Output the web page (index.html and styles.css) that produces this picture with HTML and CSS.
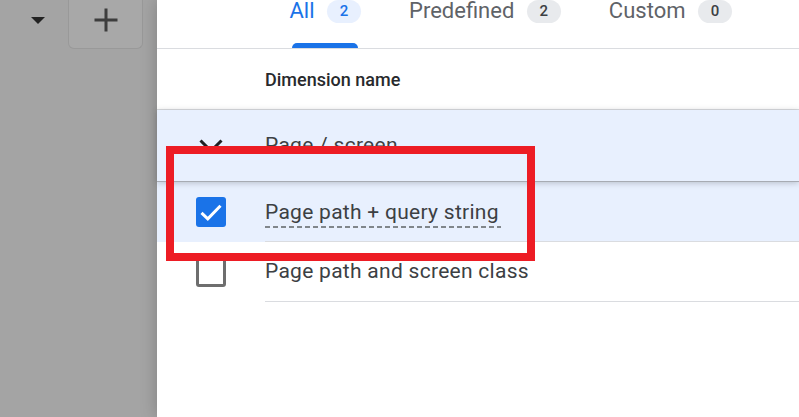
FILE: index.html
```html
<!DOCTYPE html>
<html lang="en">
<head>
<meta charset="utf-8">
<title>Dimension picker</title>
<link rel="stylesheet" href="styles.css">
</head>
<body>
  <aside class="sidebar">
    <span class="dropdown"></span>
    <div class="add-btn">
      <svg width="24" height="24" viewBox="0 0 24 24"><path d="M12 0.5V23.5M0.5 12H23.5" stroke="#3d3d3d" stroke-width="3" fill="none"/></svg>
    </div>
  </aside>
  <main class="panel">
    <nav class="tabs">
      <div class="tab active">
        <div class="tab-label"><span>All</span><span class="badge">2</span></div>
        <div class="tab-indicator"></div>
      </div>
      <div class="tab">
        <div class="tab-label"><span>Predefined</span><span class="badge">2</span></div>
      </div>
      <div class="tab">
        <div class="tab-label"><span>Custom</span><span class="badge">0</span></div>
      </div>
    </nav>
    <div class="header">Dimension name</div>
    <div class="row-sticky">
      <div class="row-clip">
        <div class="cell-check">
          <svg class="close" width="24" height="24" viewBox="0 0 24 24"><path d="M1.5 1.5L22.5 22.5M22.5 1.5L1.5 22.5" stroke="#202124" stroke-width="3" fill="none"/></svg>
        </div>
        <div class="sticky-name">Page / screen</div>
      </div>
    </div>
    <div class="row selected">
      <div class="cell-check">
        <span class="cb checked">
          <svg width="30" height="30" viewBox="0 0 30 30"><path d="M5.5 15.8L11.8 21.8L24.5 8.8" stroke="#fff" stroke-width="3" fill="none"/></svg>
        </span>
      </div>
      <div class="cell-name"><span class="underlined">Page path + query string</span></div>
    </div>
    <div class="row">
      <div class="cell-check"><span class="cb"></span></div>
      <div class="cell-name">Page path and screen class</div>
    </div>
    <div class="annotation"></div>
  </main>
</body>
</html>
```
FILE: styles.css
```css
html, body {
  margin: 0;
  height: 100%;
}
body {
  display: flex;
  overflow: hidden;
  font-family: Roboto, "Liberation Sans", sans-serif;
  background: #a4a4a4;
}
.sidebar {
  width: 157px;
  flex: none;
  display: flex;
  align-items: flex-start;
  background: #a4a4a4;
}
.dropdown {
  margin: 17px 0 0 31px;
  width: 0;
  height: 0;
  border-left: 7.5px solid transparent;
  border-right: 7.5px solid transparent;
  border-top: 7px solid #222;
}
.add-btn {
  margin-left: 23px;
  width: 75px;
  height: 49px;
  box-sizing: border-box;
  border: 1px solid #999;
  border-top: 0;
  border-radius: 0 0 6px 6px;
  background: #a8a8a8;
  display: flex;
  justify-content: center;
  align-items: flex-start;
  padding-top: 8px;
}
.panel {
  flex: 1;
  position: relative;
  background: #fff;
  box-shadow: 0 0 16px rgba(0, 0, 0, 0.22);
}
.tabs {
  display: flex;
  height: 48px;
  padding-left: 108px;
  border-bottom: 1px solid #dadce0;
}
.tab {
  display: flex;
  flex-direction: column;
  padding: 0 24px;
  color: #5f6368;
}
.tab:first-child {
  padding-left: 24.5px;
}
.tab-label {
  display: flex;
  align-items: center;
  gap: 12.5px;
  height: 26px;
  margin-top: -2px;
  font-size: 22px;
  line-height: 26px;
}
.badge {
  min-width: 34px;
  height: 23px;
  border-radius: 12px;
  display: flex;
  align-items: center;
  justify-content: center;
  font-size: 15px;
  font-weight: 500;
  background: #e8eaed;
  color: #3c4043;
}
.tab.active {
  color: #1a73e8;
}
.tab.active .badge {
  background: #e8f0fe;
  color: #1a73e8;
}
.tab-indicator {
  margin: auto 3px 0 2px;
  height: 5px;
  border-radius: 5px 5px 0 0;
  background: #1a73e8;
}
.header {
  height: 60px;
  display: flex;
  align-items: center;
  padding-left: 108px;
  border-bottom: 1px solid #dadce0;
  font-size: 18px;
  font-weight: 500;
  color: #282a2d;
}
.row-sticky {
  position: relative;
  z-index: 1;
  height: 71px;
  background: #e8f0fe;
  border-bottom: 1px solid #a7abb3;
  box-shadow: 0 1px 6px rgba(60, 64, 67, 0.28);
}
.row-clip {
  height: 36px;
  overflow: hidden;
  display: flex;
  align-items: flex-start;
}
.row-clip .cell-check {
  align-items: flex-start;
}
.close {
  margin-top: 29px;
}
.sticky-name {
  margin-top: 23px;
  font-size: 21px;
  line-height: 25px;
  letter-spacing: 0.28px;
  color: #3c4043;
}
.row {
  display: flex;
  height: 60px;
}
.row.selected {
  background: #e8f0fe;
}
.cell-check {
  width: 108px;
  flex: none;
  display: flex;
  justify-content: center;
  align-items: center;
}
.cell-name {
  flex: 1;
  display: flex;
  align-items: center;
  border-bottom: 1px solid #dadce0;
  font-size: 21px;
  line-height: 25px;
  letter-spacing: 0.28px;
  color: #3c4043;
}
.underlined {
  display: inline-block;
  padding: 4px 2px 3px 0;
  background-image: repeating-linear-gradient(to right, #80868b 0 5px, transparent 5px 8px);
  background-size: 100% 2px;
  background-repeat: no-repeat;
  background-position: 0 100%;
}
.cb {
  width: 30px;
  height: 30px;
  box-sizing: border-box;
  border: 3px solid #6e6e6e;
  border-radius: 3px;
  display: block;
}
.cb.checked {
  border: 0;
  background: #1a73e8;
}
.cb svg {
  display: block;
}
.annotation {
  position: absolute;
  left: 9px;
  top: 146px;
  width: 369px;
  height: 115px;
  box-sizing: border-box;
  border: 8px solid #ed1c24;
  z-index: 2;
  pointer-events: none;
}
```
